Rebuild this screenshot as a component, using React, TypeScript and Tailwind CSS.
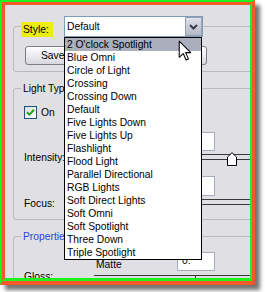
import React from "react";

const LIGHTS = [
  "2 O'clock Spotlight",
  "Blue Omni",
  "Circle of Light",
  "Crossing",
  "Crossing Down",
  "Default",
  "Five Lights Down",
  "Five Lights Up",
  "Flashlight",
  "Flood Light",
  "Parallel Directional",
  "RGB Lights",
  "Soft Direct Lights",
  "Soft Omni",
  "Soft Spotlight",
  "Three Down",
  "Triple Spotlight",
];

function TextBox({ value = "", tall = false }: { value?: string; tall?: boolean }) {
  return (
    <div
      className={
        "ml-[161px] w-[40px] border border-[#a7adb8] bg-white pl-[4px] leading-[17px] " +
        (tall ? "h-[20px]" : "h-[19px]")
      }
    >
      {value}
    </div>
  );
}

function Slider({ thumb }: { thumb?: number }) {
  return (
    <div className="relative flex-1">
      <div className="mt-[3px] h-[6px] border-y border-[#3a3a3a]" />
      {thumb !== undefined && (
        <svg
          className="absolute top-[1px]"
          style={{ left: thumb }}
          width="10"
          height="14"
          viewBox="0 0 10 14"
        >
          <path d="M0.5 13.5 V5 L5 0.7 L9.5 5 V13.5 Z" fill="#ffffff" stroke="#000000" />
        </svg>
      )}
    </div>
  );
}

export default function App() {
  return (
    <div className="min-h-screen bg-white font-['Liberation_Sans',Arial,sans-serif] text-[10.3px] text-black">
      {/* ── Coloured frame ─────────────────────────────────────────── */}
      <div className="h-[285px] w-[255px] border-t-2 border-l-2 border-r-[3px] border-b-[4px] border-t-[#1ff01f] border-l-[#1ff01f] border-r-[#f5592a] border-b-[#f5592a] shadow-[5px_5px_4px_rgba(0,0,0,0.55)]">
        <div className="relative h-full overflow-hidden border-t-[3px] border-l-[3px] border-r-2 border-b-[3px] border-t-[#f5592a] border-l-[#f5592a] border-r-[#1ff01f] border-b-[#1ff01f] bg-[#e0dfe3] pl-[8px] pt-[11px]">
          {/* ── Style group ─────────────────────────────────────────── */}
          <fieldset className="w-[260px] rounded-[3px] border border-[#b9b9c2] pb-[6px]">
            <legend className="ml-[7px]">
              <div className="flex items-end">
                <span className="h-[15px] w-[32px] bg-[#eded12] pl-[2px] leading-[15px]">Style:</span>
                <div className="ml-[11px] flex h-[21px] w-[139px] border border-[#7f9db9] bg-white">
                  <span className="flex-1 pl-[2px] leading-[19px]">Default</span>
                  <div className="flex h-[19px] w-[17px] items-center justify-center border border-[#9aa0b4] bg-gradient-to-b from-[#dfe1e9] to-[#b4b8c8]">
                    <svg width="9" height="6" viewBox="0 0 9 6">
                      <path d="M1 1 L4.5 4.5 L8 1" fill="none" stroke="#3b3b48" strokeWidth="2" />
                    </svg>
                  </div>
                </div>
              </div>
            </legend>
            <div className="ml-[11px] mt-[9px] flex">
              <div className="h-[19px] w-[64px] rounded-[3px] border border-[#7c7c86] bg-gradient-to-b from-white to-[#d8d8e0] pl-[15px] leading-[17px]">
                Save
              </div>
              <div className="ml-[61px] flex h-[19px] w-[57px] items-center justify-center rounded-[3px] border border-[#7c7c86] bg-gradient-to-b from-white to-[#d8d8e0]">
                Delete
              </div>
            </div>
          </fieldset>

          {/* ── Light Type group ────────────────────────────────────── */}
          <fieldset className="mt-[10px] w-[260px] rounded-[3px] border border-[#b9b9c2] pb-[8px]">
            <legend className="ml-[7px] px-[2px] leading-[13px]">Light Type</legend>
            <div className="ml-[10px] mt-[11px] flex items-center">
              <div className="flex h-[13px] w-[13px] items-center justify-center border border-[#1c5180] bg-gradient-to-br from-[#dcdcd6] to-white">
                <svg width="9" height="9" viewBox="0 0 9 9">
                  <path d="M1 4.2 L3.4 6.6 L8 1.8" fill="none" stroke="#21a121" strokeWidth="2" />
                </svg>
              </div>
              <span className="ml-[4px] leading-[13px]">On</span>
            </div>

            <div className="mt-[13px]">
              <TextBox />
            </div>
            <div className="flex h-[15px] items-start">
              <span className="w-[56px] pl-[10px] leading-[13px]">Intensity:</span>
              <Slider thumb={157} />
            </div>

            <div className="mt-[10px]">
              <TextBox tall />
            </div>
            <div className="flex h-[15px] items-start">
              <span className="mt-[1px] w-[56px] pl-[10px] leading-[13px]">Focus:</span>
              <Slider />
            </div>
          </fieldset>

          {/* ── Properties group ────────────────────────────────────── */}
          <fieldset className="mt-[10px] w-[260px] rounded-[3px] border border-[#b9b9c2] pb-[8px]">
            <legend className="ml-[7px] px-[2px] leading-[13px] text-[#1f48d8]">Properties</legend>
            <div className="mt-[9px] flex h-[19px] items-end">
              <span className="ml-[82px] w-[81px] leading-[13px]">Matte</span>
              <div className="h-[19px] w-[38px] border border-[#a7adb8] bg-white pl-[4px] leading-[15px]">0.</div>
            </div>
            <div className="flex">
              <span className="mt-[-1px] w-[80px] pl-[10px] leading-[13px]">Gloss:</span>
              <div className="relative mt-[4px] h-[6px] flex-1 border-t border-[#3a3a3a]">
                <div className="absolute left-[101px] top-0 h-[3px] w-[1px] bg-[#3a3a3a]" />
              </div>
            </div>
          </fieldset>

          {/* ── Open dropdown list ──────────────────────────────────── */}
          <div className="absolute left-[59px] top-[32px] w-[138px] border border-black bg-white">
            {LIGHTS.map((name, i) => (
              <div
                key={name}
                className={
                  "h-[13px] whitespace-nowrap pl-[2px] leading-[13px] " + (i === 0 ? "bg-[#abaebd]" : "")
                }
              >
                {name}
              </div>
            ))}
          </div>

          {/* ── Mouse pointer ───────────────────────────────────────── */}
          <svg className="absolute left-[173px] top-[35px]" width="14" height="21" viewBox="0 0 13 20">
            <path
              d="M1 1 L1 16.5 L4.8 12.9 L7.6 19 L9.8 18 L7.1 12 L12 12 Z"
              fill="#ffffff"
              stroke="#000000"
              strokeWidth="1"
              strokeLinejoin="round"
            />
          </svg>
        </div>
      </div>
    </div>
  );
}
